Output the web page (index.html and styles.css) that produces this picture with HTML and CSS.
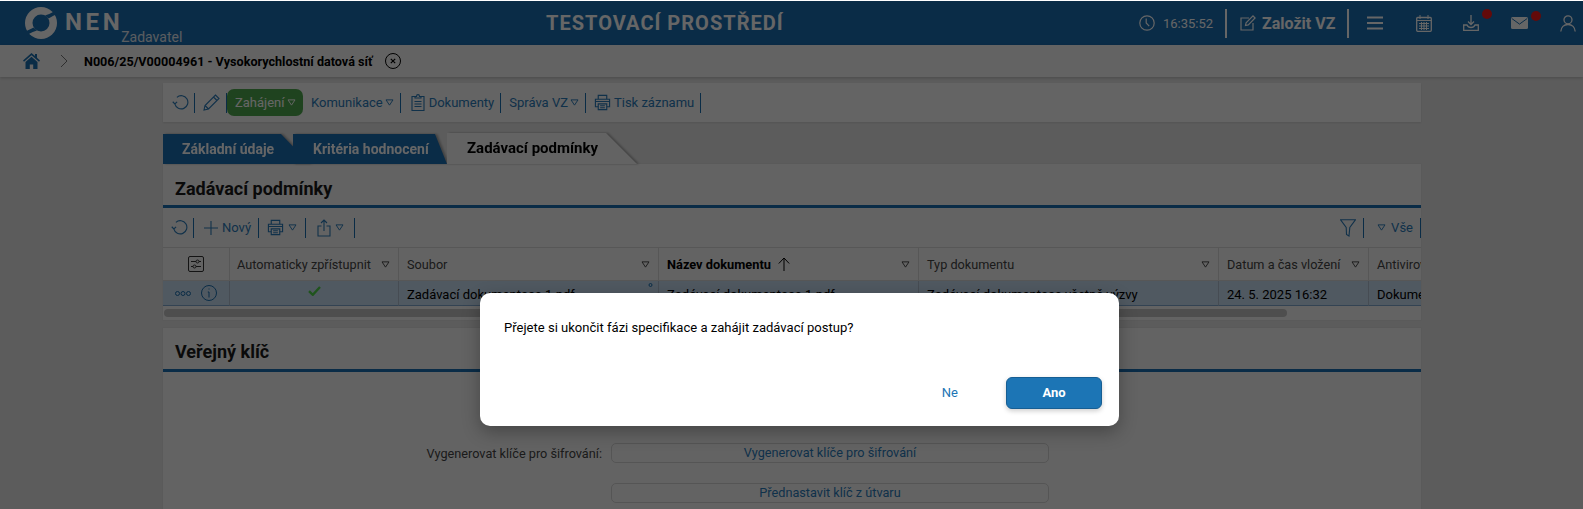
FILE: index.html
```html
<!DOCTYPE html>
<html lang="cs">
<head>
<meta charset="utf-8">
<title>NEN</title>
<link rel="stylesheet" href="styles.css">
</head>
<body>
<svg class="defs" width="0" height="0">
  <symbol id="tri" viewBox="0 0 10 8"><path d="M1 1h8L5 7z" fill="none" stroke="currentColor" stroke-width="1.1"/></symbol>
  <symbol id="refresh" viewBox="0 0 18 18"><path d="M5.200 3.500A7 7 0 1 1 3 10.500M.8 8.200L3 10.500l2.400-2.200" fill="none" stroke="currentColor" stroke-width="1.2"/></symbol>
  <symbol id="printer" viewBox="0 0 18 18"><g fill="none" stroke="currentColor" stroke-width="1.2"><path d="M4.5 5.5V1.5h9v4M4.5 13.5H1.5v-8h15v8h-3"/><path d="M4.5 10.5h9v6h-9zM6.5 12.5h5M6.5 14.5h5M1.5 8h15"/></g></symbol>
</svg>

<header class="topbar">
  <div class="brand">
    <svg class="logo" viewBox="0 0 32 32" width="32" height="32">
      <circle cx="16" cy="16" r="16" fill="#fff"/>
      <circle cx="16" cy="16" r="8.500" fill="#1a6eb2"/>
      <path fill="#1a6eb2" d="M33 1C28 6 24 7 20 8.500L23.500 11.500C27 9.500 30 8 33 7z"/>
      <path fill="#1a6eb2" transform="rotate(180 16 16)" d="M33 1C28 6 24 7 20 8.500L23.500 11.500C27 9.500 30 8 33 7z"/>
    </svg>
    <span class="brand-name">NEN</span>
    <span class="brand-role">Zadavatel</span>
  </div>
  <div class="env">TESTOVACÍ PROSTŘEDÍ</div>
  <div class="top-actions">
    <svg class="ti clock" viewBox="0 0 16 16" width="16" height="16"><g fill="none" stroke="currentColor" stroke-width="1.2"><circle cx="8" cy="8" r="7.200"/><path d="M7.200 3.500V8l3 3.200"/></g></svg>
    <span class="time">16:35:52</span>
    <span class="tsep"></span>
    <svg class="ti" viewBox="0 0 16 16" width="16" height="16"><g fill="none" stroke="currentColor" stroke-width="1.2"><path d="M9 3H1v12h12V8"/><path d="M5.500 10.500l.6-2.800L13 .9l2.100 2.100-6.800 6.900z"/></g></svg>
    <span class="create">Založit VZ</span>
    <span class="tsep"></span>
    <svg class="ti burger" viewBox="0 0 16 14" width="16" height="14"><path d="M0 1.500h16M0 7h16M0 12.500h16" stroke="currentColor" stroke-width="2"/></svg>
    <svg class="ti cal" viewBox="0 0 16 17" width="16" height="17"><g fill="none" stroke="currentColor" stroke-width="1.3"><rect x=".7" y="2.500" width="14.600" height="13.800" rx="1"/><path d="M4 0v4M12 0v4M.7 5.500h14.600M3 8.500h10M3 11h10M3 13.500h10M5.500 7v8M8 7v8M10.500 7v8" stroke-width="1"/></g></svg>
    <span class="badged dl">
      <svg class="ti" viewBox="0 0 16 16" width="16" height="16"><g fill="none" stroke="currentColor" stroke-width="1.3"><path d="M8 0v9M5 6.500L8 9.500l3-3M4 10H.7v5.300h14.600V10H12c-.8 2-2 2.500-4 2.500S4.800 12 4 10z"/></g></svg>
      <i class="dot"></i>
    </span>
    <span class="badged ml">
      <svg class="ti" viewBox="0 0 17 12" width="17" height="12"><rect width="17" height="12" rx="1.500" fill="currentColor"/><path d="M.8 1.500l7.700 5.600 7.700-5.600" fill="none" stroke="#1a6eb2" stroke-width="1"/></svg>
      <i class="dot"></i>
    </span>
    <svg class="ti user" viewBox="0 0 16 17" width="16" height="17"><g fill="none" stroke="currentColor" stroke-width="1.300"><circle cx="8" cy="4.800" r="4"/><path d="M.8 16.500c.3-4 3-7 7.200-7s6.900 3 7.200 7"/></g></svg>
  </div>
</header>

<nav class="crumbs">
  <svg class="home" viewBox="0 0 17 16" width="17" height="16"><path fill="#1a6fb0" d="M8.500 0L0 7.500l1 1.200 7.500-6.500 7.500 6.500 1-1.200-3-2.700V1h-2v2zM8.500 3.800L2.500 9v7h4.300v-4.500h3.400V16h4.300V9z"/></svg>
  <svg class="chev" viewBox="0 0 8 14" width="8" height="14"><path d="M1 1l6 6-6 6" fill="none" stroke-width="1"/></svg>
  <span class="crumb-title">N006/25/V00004961 - Vysokorychlostní datová síť</span>
  <svg class="crumb-x" viewBox="0 0 16 16" width="16" height="16"><g fill="none" stroke="#000" stroke-width="1"><circle cx="8" cy="8" r="7.500"/><path d="M5.800 5.800l4.400 4.400M10.200 5.800l-4.400 4.400" stroke-width="1.200"/></g></svg>
</nav>

<main class="page">
  <div class="toolbar main-tools">
    <svg class="ic" width="17" height="17"><use href="#refresh"/></svg>
    <i class="sep s1"></i>
    <svg class="ic pen" viewBox="0 0 17 17" width="17" height="17"><path d="M1 16l1-4.500L12.500 1l3.500 3.500L5.500 15zM2 11.500L5.500 15M10.500 3l3.500 3.500" fill="none" stroke="currentColor" stroke-width="1.100"/></svg>
    <i class="sep s2"></i>
    <span class="btn-green">Zahájení <svg class="tri" width="9" height="7"><use href="#tri"/></svg></span>
    <span class="tl komu">Komunikace <svg class="tri" width="9" height="7"><use href="#tri"/></svg></span>
    <i class="sep s3"></i>
    <svg class="ic doc" viewBox="0 0 14 17" width="14" height="17"><g fill="none" stroke="currentColor" stroke-width="1.100"><path d="M4 2.500H1v14h12v-14h-3"/><path d="M4 4V2.500h1.500C5.500 1 6 .6 7 .6S8.500 1 8.500 2.500H10V4zM3.500 7.500h7M3.500 10h7M3.500 12.500h7"/></g></svg>
    <span class="tl dok">Dokumenty</span>
    <i class="sep s3"></i>
    <span class="tl spr">Správa VZ <svg class="tri" width="9" height="7"><use href="#tri"/></svg></span>
    <i class="sep s4"></i>
    <svg class="ic print-main" width="17" height="17"><use href="#printer"/></svg>
    <span class="tl tisk">Tisk záznamu</span>
    <i class="sep s3"></i>
  </div>

  <div class="tabs">
    <span class="tab-wrap"><span class="tab tab-a">Základní údaje</span></span>
    <span class="tab-wrap wrap-b"><span class="tab tab-b">Kritéria hodnocení</span></span>
    <span class="tab-wrap"><span class="tab-active">Zadávací podmínky</span></span>
  </div>

  <section class="card first">
    <h2 class="card-title">Zadávací podmínky</h2>
    <div class="toolbar table-tools">
      <svg class="ic" width="17" height="17"><use href="#refresh"/></svg>
      <i class="sep s1"></i>
      <svg class="ic plus" viewBox="0 0 14 14" width="14" height="14"><path d="M7 0v14M0 7h14" stroke="currentColor" stroke-width="1.100"/></svg>
      <span class="tl novy">Nový</span>
      <i class="sep s5"></i>
      <svg class="ic print-sub" width="17" height="17"><use href="#printer"/></svg>
      <svg class="tri t1" width="9" height="7"><use href="#tri"/></svg>
      <i class="sep s6"></i>
      <svg class="ic share" viewBox="0 0 14 18" width="14" height="18"><path d="M4.500 7H1v10h12V7H9.500M7 12V1M4 4l3-3 3 3" fill="none" stroke="currentColor" stroke-width="1.100"/></svg>
      <svg class="tri t2" width="9" height="7"><use href="#tri"/></svg>
      <i class="sep s8"></i>
      <span class="tools-right">
        <svg class="ic funnel" viewBox="0 0 16 18" width="16" height="18"><path d="M.6.800h14.800L9.800 8.500 9 17l-2.500-1.500-.3-7z" fill="none" stroke="currentColor" stroke-width="1.100"/></svg>
        <i class="sep s7"></i>
        <svg class="tri t3" width="9" height="7"><use href="#tri"/></svg>
        <span class="tl vse">Vše</span>
        <i class="sep s7"></i>
      </span>
    </div>

    <div class="grid">
      <div class="hd hd-icon"><svg viewBox="0 0 16 16" width="16" height="16"><g fill="none" stroke="#333" stroke-width="1"><rect x=".5" y=".5" width="15" height="15" rx="1.500"/><path d="M3 5.500h5M11 5.500h2M3 10.500h2M8 10.500h5"/><circle cx="9.500" cy="5.500" r="1.500"/><circle cx="6.500" cy="10.500" r="1.500"/></g></svg></div>
      <div class="hd hd-auto"><span>Automaticky zpřístupnit</span><svg class="hd-tri" width="9" height="7"><use href="#tri"/></svg></div>
      <div class="hd"><span>Soubor</span><svg class="hd-tri" width="9" height="7"><use href="#tri"/></svg></div>
      <div class="hd hd-sort"><span>Název dokumentu</span><svg class="sort" viewBox="0 0 12 14" width="12" height="14"><path d="M6 14V1M.8 6.500L6 1l5.200 5.500" fill="none" stroke="#000" stroke-width="1"/></svg><svg class="hd-tri" width="9" height="7"><use href="#tri"/></svg></div>
      <div class="hd"><span>Typ dokumentu</span><svg class="hd-tri" width="9" height="7"><use href="#tri"/></svg></div>
      <div class="hd"><span>Datum a čas vložení</span><svg class="hd-tri" width="9" height="7"><use href="#tri"/></svg></div>
      <div class="hd hd-clip"><span>Antivirová kontrola</span></div>

      <div class="td td-icons">
        <svg viewBox="0 0 16 5" width="16" height="5"><g fill="none" stroke="#1a6fb0" stroke-width="1"><circle cx="2.500" cy="2.500" r="2"/><circle cx="8" cy="2.500" r="2"/><circle cx="13.500" cy="2.500" r="2"/></g></svg>
        <svg viewBox="0 0 16 16" width="16" height="16"><g fill="none" stroke="#1a6fb0" stroke-width="1"><circle cx="8" cy="8" r="7.500"/><path d="M8 3.500v1M6.800 7H8v5.500"/></g></svg>
      </div>
      <div class="td td-check"><svg viewBox="0 0 13 10" width="13" height="10"><path d="M1 5.200l3.800 3.600L12 1" fill="none" stroke="#4fd14a" stroke-width="2.400"/></svg></div>
      <div class="td td-file"><span>Zadávací dokumentace 1.pdf</span><svg class="pin" viewBox="0 0 5 10" width="5" height="10"><circle cx="2.500" cy="2" r="1.500" fill="none" stroke="#1a6fb0"/></svg></div>
      <div class="td">Zadávací dokumentace 1.pdf</div>
      <div class="td">Zadávací dokumentace včetně výzvy</div>
      <div class="td">24. 5. 2025 16:32</div>
      <div class="td td-clip">Dokument čistý</div>
    </div>
    <div class="scroll"><div class="thumb"></div></div>
  </section>

  <section class="card second">
    <h2 class="card-title">Veřejný klíč</h2>
    <div class="form">
      <label class="form-label">Vygenerovat klíče pro šifrování:</label>
      <span class="form-btn">Vygenerovat klíče pro šifrování</span>
      <span></span>
      <span class="form-btn">Přednastavit klíč z útvaru</span>
    </div>
  </section>
</main>

<div class="overlay"></div>
<div class="dialog">
  <p class="dialog-text">Přejete si ukončit fázi specifikace a zahájit zadávací postup?</p>
  <div class="dialog-actions">
    <span class="btn-no">Ne</span>
    <span class="btn-yes">Ano</span>
  </div>
</div>
</body>
</html>
```
FILE: styles.css
```css
* { box-sizing: border-box; }
html, body { margin: 0; height: 509px; overflow: hidden; }
body { background: #e6e6e6; border-top: 1px solid #fff; font-family: Roboto, "Liberation Sans", sans-serif; font-size: 13px; color: #000; position: relative; }
.defs { position: absolute; }

.topbar { height: 44px; background: #1a6eb2; display: flex; align-items: center; color: #fff; padding-left: 25px; }
.brand { flex: none; display: flex; align-items: flex-start; width: 521px; height: 44px; }
.logo { margin-top: 6px; flex: none; }
.brand-name { font-size: 24px; font-weight: 700; letter-spacing: 3.6px; margin-left: 8px; margin-top: 7px; line-height: 28px; }
.brand-role { font-size: 14px; color: #e0e8f0; margin-left: -2px; margin-top: 28px; line-height: 17px; }
.env { flex: none; font-size: 20px; font-weight: 700; letter-spacing: 1.02px; width: 236px; white-space: nowrap; }
.top-actions { flex: none; display: flex; align-items: center; margin-left: 357px; height: 44px; }
.ti { flex: none; display: block; }
.time { font-size: 13px; margin-left: 8px; width: 49px; }
.tsep { width: 2px; height: 29px; background: #fff; margin: 0 13px; }
.create { font-size: 16px; font-weight: 700; margin-left: 6px; width: 72px; white-space: nowrap; }
.burger { margin-left: 5px; }
.cal { margin-left: 33px; }
.badged { position: relative; display: block; margin-left: 31px; }
.ml { margin-left: 32px; }
.dot { position: absolute; width: 10px; height: 10px; border-radius: 50%; background: #f71a1a; top: -6px; right: -13px; }
.user { margin-left: 32px; }

.crumbs { height: 32px; background: #f8f8f8; display: flex; align-items: center; padding-left: 23px; box-shadow: 0 1px 3px rgba(0,0,0,.2); position: relative; }
.chev { margin-left: 20px; }
.chev path { stroke: #777; }
.crumb-title { font-size: 12.600px; font-weight: 700; margin-left: 16px; width: 301px; white-space: nowrap; }

.page { padding: 6px 162px 0 163px; }
.toolbar { display: flex; align-items: center; color: #2a7ab8; }
.main-tools { height: 39px; background: #f9f9f9; box-shadow: 0 1px 2px rgba(0,0,0,.1); padding-left: 9px; }
.ic { flex: none; display: block; }
.sep { flex: none; width: 1px; height: 20px; background: #1a6fb0; display: block; }
.tri { flex: none; color: #2a7ab8; }
.s1 { margin-left: 5px; }
.pen { margin-left: 8px; }
.s2 { margin-left: 6px; }
.btn-green { height: 27px; width: 76px; border-radius: 7px; background: #4fa84f; color: #fff; display: flex; align-items: center; justify-content: space-between; padding: 0 7px 0 8px; }
.btn-green .tri { color: #fff; }
.tl { white-space: nowrap; display: flex; align-items: center; }
.tl .tri { margin-left: 2px; }
.komu { margin-left: 8px; }
.s3 { margin-left: 6px; }
.doc { margin-left: 10px; }
.dok { margin-left: 4px; }
.spr { margin-left: 8px; }
.s4 { margin-left: 6px; }
.print-main { margin-left: 8px; }
.tisk { margin-left: 3px; }

.tabs { height: 30px; margin-top: 12px; display: flex; align-items: flex-end; font-weight: 700; font-size: 14px; }
.tab-wrap { display: block; filter: drop-shadow(2px 0 1px rgba(0,0,0,.3)); }
.wrap-b { margin-left: -17px; }
.tab { display: block; height: 30px; line-height: 31px; color: #fff; background: #1a6eb2; white-space: nowrap; }
.tab-a { width: 147px; padding-left: 19px; clip-path: polygon(0 0, 118px 0, 147px 100%, 0 100%); }
.tab-b { width: 154px; padding-left: 20px; clip-path: polygon(0 0, 142px 0, 154px 100%, 0 100%); }
.tab-active { display: block; height: 31px; width: 190px; padding-left: 20px; line-height: 30px; background: #f8f8f8; clip-path: polygon(0 0, 159px 0, 190px 100%, 0 100%); font-size: 15px; white-space: nowrap; }

.card { background: #f8f8f8; box-shadow: 0 0 2px rgba(0,0,0,.08); }
.first { height: 156px; }
.second { margin-top: 8px; height: 200px; }
.card-title { margin: 0; font-size: 18px; font-weight: 700; color: #1b1b1b; height: 44px; line-height: 47px; padding-left: 12px; border-bottom: 3px solid #1a6eb2; }
.first .card-title { line-height: 49px; }
.table-tools { height: 39px; padding-left: 8px; }
.plus { margin-left: 10px; }
.novy { margin-left: 4px; }
.s5 { margin-left: 7px; }
.print-sub { margin-left: 8px; }
.s6 { margin-left: 8px; }
.s8 { margin-left: 10px; }
.t1 { margin-left: 4px; }
.share { margin-left: 11px; }
.t2 { margin-left: 4px; }
.t3 { margin-left: 13px; }
.vse { margin-left: 5px; }
.tools-right { margin-left: auto; display: flex; align-items: center; }
.s7 { margin-left: 7px; }

.grid { display: grid; grid-template-columns: 67px 169px 260px 260px 300px 150px 52px; grid-template-rows: 33px 25px; border-top: 1px solid #d9d9d9; width: 1258px; overflow: hidden; }
.hd { display: flex; align-items: center; padding: 0 8px; font-size: 12.700px; color: #444; border-right: 1px solid #d9d9d9; border-bottom: 1px solid #d9d9d9; white-space: nowrap; background: #f8f8f8; }
.hd-auto { padding-left: 7px; }
.hd-tri { margin-left: auto; color: #444; flex: none; }
.hd-icon { justify-content: center; }
.hd-sort { font-weight: 700; color: #000; font-size: 12.800px; }
.sort { margin-left: 7px; flex: none; }
.hd-clip { overflow: hidden; border-right: 0; }
.td { background: #c9def2; padding: 3px 8px 0; display: flex; align-items: center; border-right: 1px solid #aebfd0; border-bottom: 1px solid #7fa9cf; white-space: nowrap; overflow: hidden; }
.td-icons { padding: 0 0 0 12px; gap: 10px; }
.td-check { justify-content: center; padding: 0 0 4px; }
.td-file { justify-content: space-between; padding-right: 5px; }
.pin { margin-top: -14px; flex: none; }
.td-clip { border-right: 0; }
.scroll { height: 8px; margin-top: 3px; padding: 0 1px; }
.thumb { width: 1123px; height: 8px; background: #c2c2c2; border-radius: 4px; }

.form { display: grid; grid-template-columns: 439px 438px; column-gap: 9px; row-gap: 20px; grid-auto-rows: 20px; margin-top: 71px; align-items: center; }
.form-label { text-align: right; color: #444; white-space: nowrap; font-size: 12.700px; }
.form-btn { height: 20px; padding-bottom: 1px; border: 1px solid #d4d4d4; border-radius: 5px; background: #f8f8f8; color: #2a7ab8; font-size: 12.700px; display: flex; align-items: center; justify-content: center; }

.overlay { position: absolute; inset: 0; background: rgba(0,0,0,.6); }
.dialog { position: absolute; left: 480px; top: 292px; width: 639px; height: 133px; background: #fff; border-radius: 10px; box-shadow: 0 6px 18px rgba(0,0,0,.3); padding: 0 17px 0 24px; display: flex; flex-direction: column; }
.dialog-text { margin: 26px 0 0; font-size: 13.050px; line-height: 18px; }
.dialog-actions { margin-top: auto; margin-bottom: 17px; display: flex; align-items: center; justify-content: flex-end; }
.btn-no { color: #1c75b5; margin-right: 48px; padding-bottom: 2px; }
.btn-yes { width: 96px; height: 32px; padding-bottom: 2px; background: #1c75b5; border: 1px solid #165e93; color: #fff; font-weight: 700; border-radius: 6px; display: flex; align-items: center; justify-content: center; box-shadow: 0 2px 5px rgba(0,0,0,.2); }
```
